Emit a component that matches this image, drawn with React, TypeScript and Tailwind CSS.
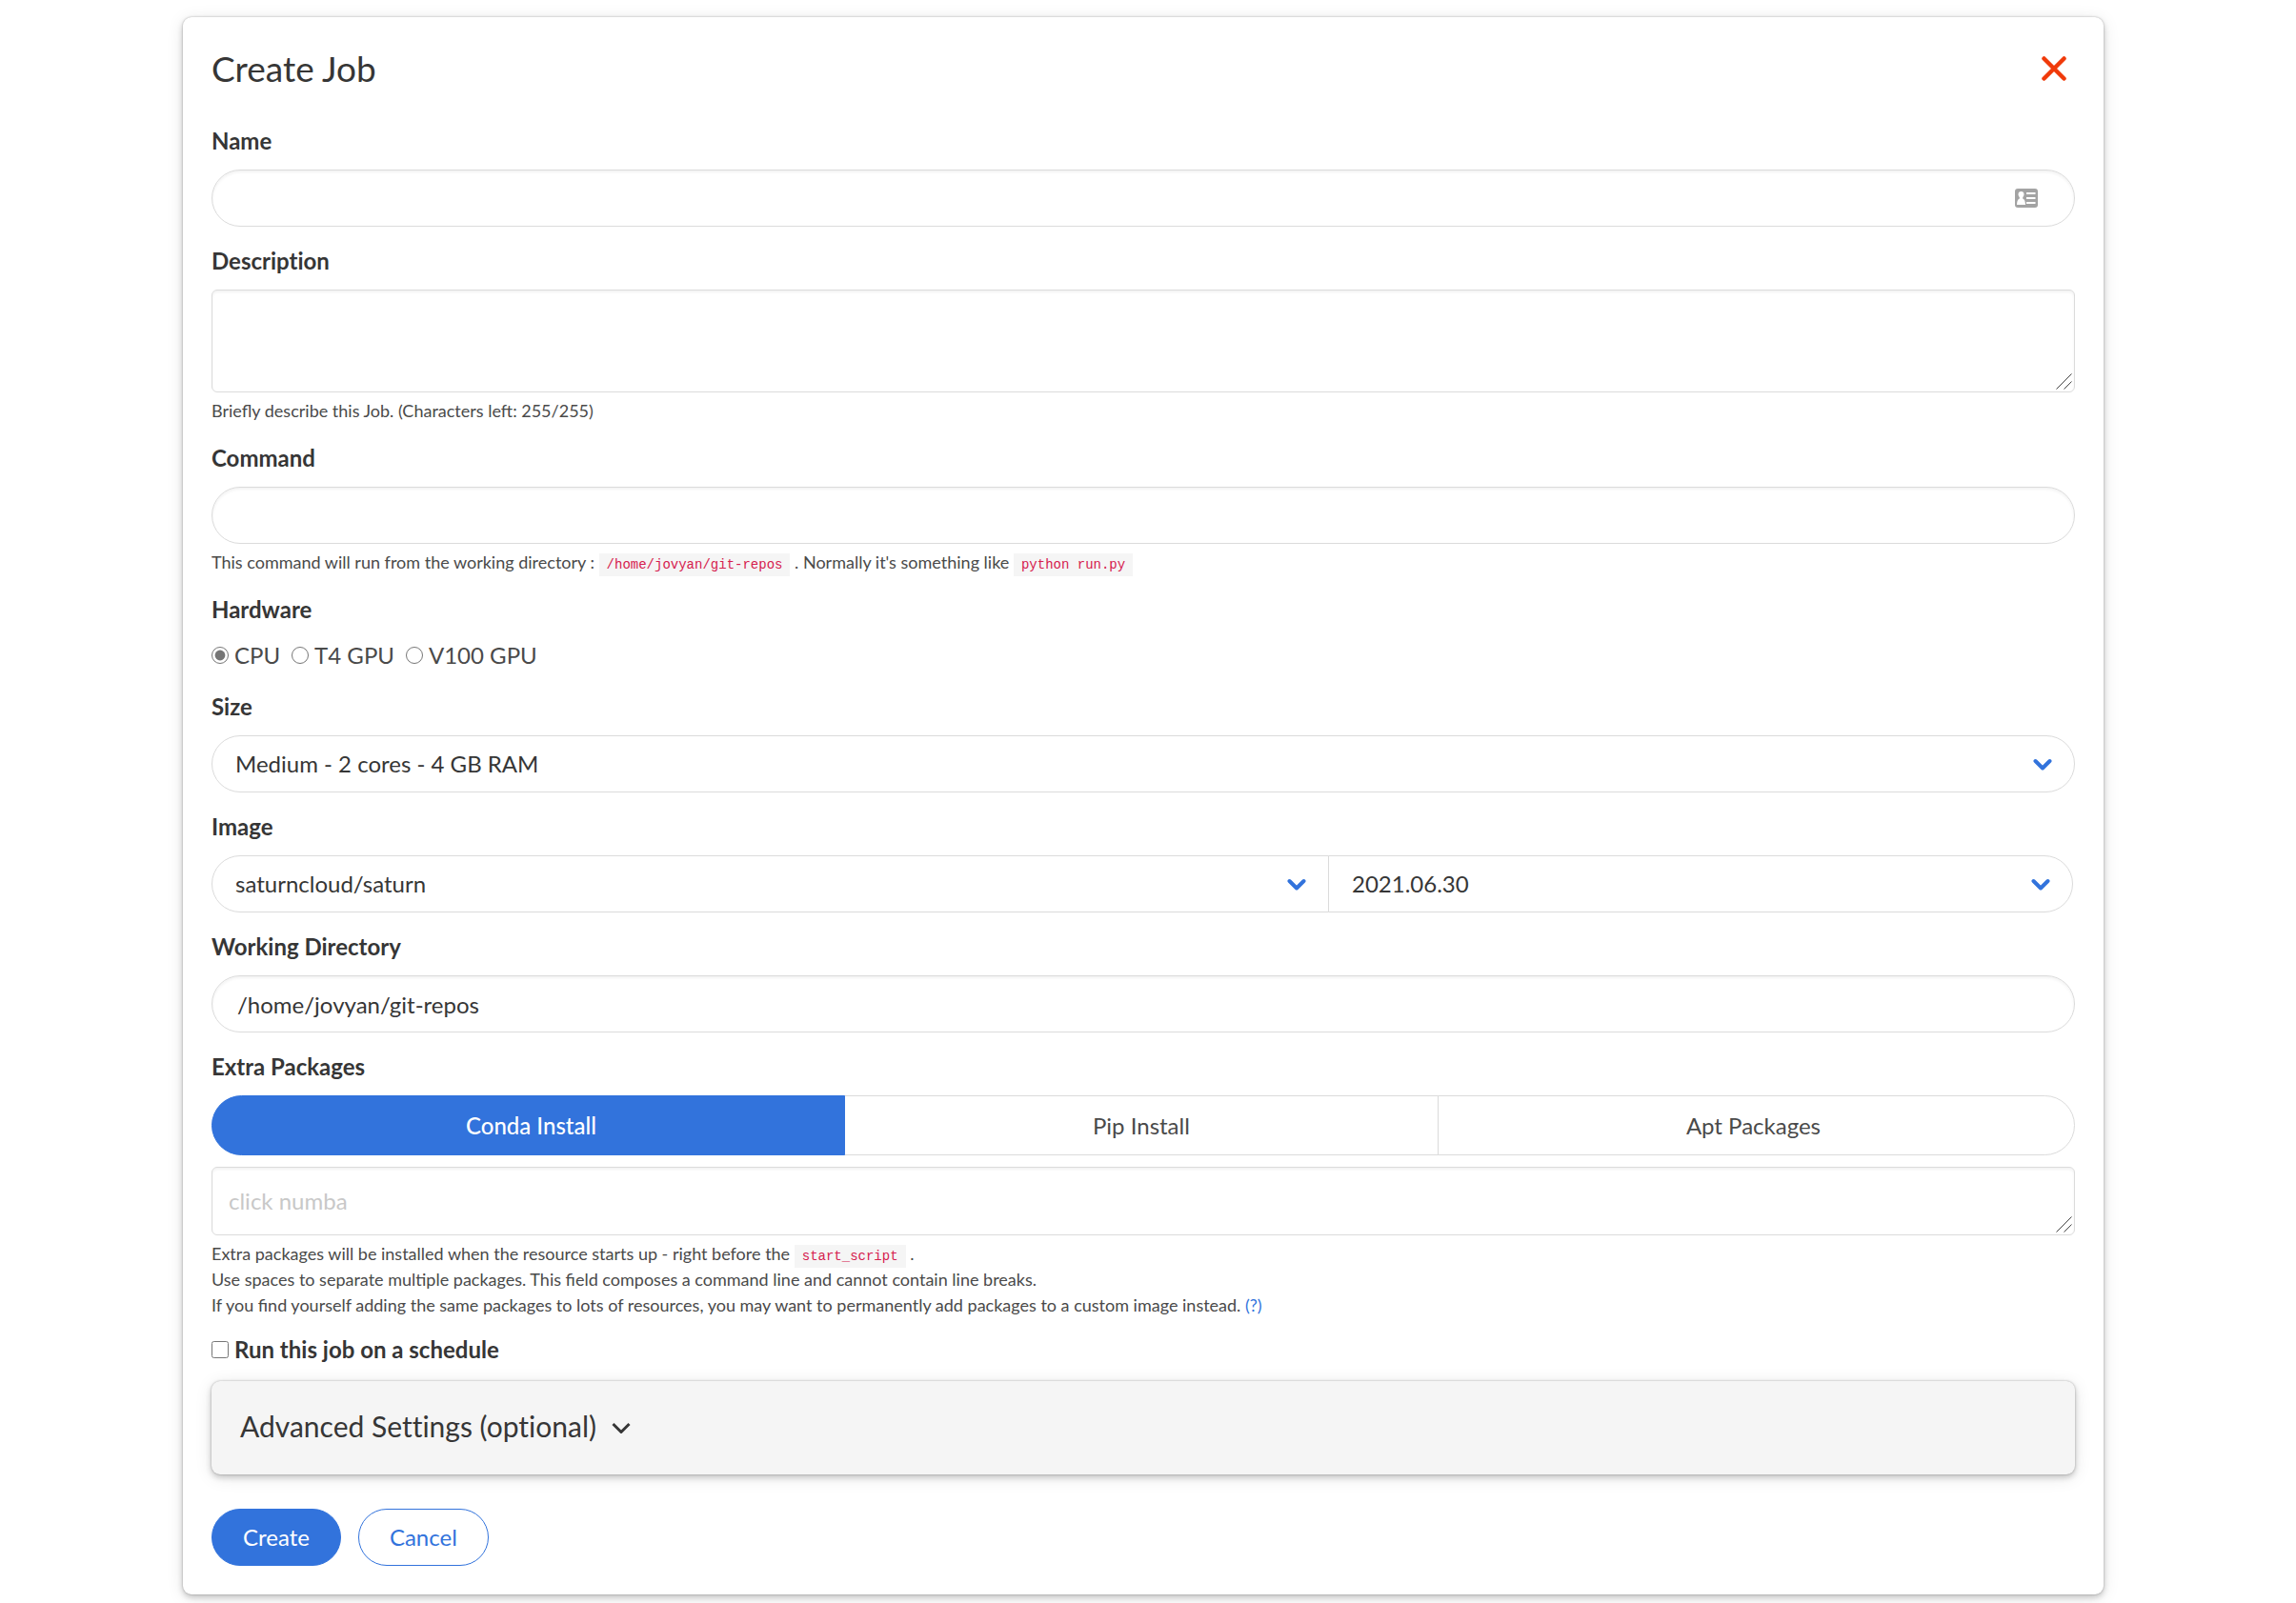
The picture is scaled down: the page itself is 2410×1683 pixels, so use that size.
import { useState } from "react";
import type { ReactNode } from "react";
import clsx from "clsx";

const packageTabs = ["Conda Install", "Pip Install", "Apt Packages"];
const hardwareOptions = ["CPU", "T4 GPU", "V100 GPU"];

const labelClass =
  "block text-2xl leading-9 font-bold text-[#363636] [font-variant-ligatures:no-common-ligatures]";
const controlClass =
  "block w-full h-[60px] rounded-full border border-[#dbdbdb] bg-white text-2xl text-[#363636] outline-none focus:border-[#3273dc]";
const inputClass = clsx(controlClass, "px-[26px] shadow-[inset_0_2px_3px_rgba(10,10,10,0.05)]");
const shadowClass =
  "shadow-[0_0_2px_rgba(10,10,10,0.3),0_3px_6px_rgba(10,10,10,0.2),0_3px_18px_rgba(10,10,10,0.1)]";

function Field({ label, htmlFor, children }: { label: string; htmlFor: string; children: ReactNode }) {
  return (
    <div className="mb-[18px]">
      <label htmlFor={htmlFor} className={clsx(labelClass, "mb-3")}>
        {label}
      </label>
      {children}
    </div>
  );
}

function Help({ children }: { children: ReactNode }) {
  return <p className="mt-[6px] text-lg leading-[27px] text-[#4a4a4a]">{children}</p>;
}

function Code({ children }: { children: ReactNode }) {
  return (
    <code className="px-2 py-1 bg-[#f5f5f5] font-['Liberation_Mono',monospace] text-sm text-[#d6204e]">
      {children}
    </code>
  );
}

function Select({ id, label, options, className }: { id: string; label?: string; options: string[]; className?: string }) {
  return (
    <div className="relative">
      <select id={id} aria-label={label} className={clsx(controlClass, "appearance-none px-6", className)}>
        {options.map((option) => (
          <option key={option}>{option}</option>
        ))}
      </select>
      <svg
        viewBox="0 0 20 13"
        className="absolute right-6 top-6 w-5 h-[13px] text-[#3273dc] pointer-events-none"
        fill="none"
        aria-hidden="true"
      >
        <path d="M2.500 3 10 10.500 17.500 3" stroke="currentColor" strokeWidth="4" strokeLinecap="round" strokeLinejoin="round" />
      </svg>
    </div>
  );
}

function TextArea({ id, className, placeholder }: { id: string; className: string; placeholder?: string }) {
  return (
    <div className="relative">
      <textarea
        id={id}
        placeholder={placeholder}
        className={clsx(
          "block w-full px-[17px] py-[17px] resize-none rounded-md border border-[#dbdbdb] shadow-[inset_0_2px_3px_rgba(10,10,10,0.05)]",
          "text-2xl leading-9 text-[#363636] placeholder:text-[#c8c8c8] outline-none focus:border-[#3273dc]",
          className
        )}
      />
      {/* Resize grip */}
      <svg viewBox="0 0 17 17" className="absolute right-[3px] bottom-[3px] w-[17px] h-[17px]" fill="none" stroke="#444" aria-hidden="true">
        <path d="M.5 16.500 16.500.5M8.500 16.500l8-8" />
      </svg>
    </div>
  );
}

export default function App() {
  const [hardware, setHardware] = useState("CPU");
  const [activeTab, setActiveTab] = useState("Conda Install");
  const [scheduled, setScheduled] = useState(false);

  return (
    <main className="pt-[18px] pb-[9px] pl-48 pr-[202px] bg-white font-['Lato',sans-serif] text-[#4a4a4a]">
      <form
        className={clsx("p-[30px] rounded-[9px] bg-white", shadowClass)}
        onSubmit={(e) => e.preventDefault()}
      >
        {/* Header */}
        <div className="flex items-center justify-between h-12 mb-[34px]">
          <h1 className="text-[37px] leading-12 text-[#363636]">Create Job</h1>
          <button type="button" aria-label="Close" className="mr-[9px]">
            <svg viewBox="0 0 26 26" className="w-[26px] h-[26px]" fill="none" aria-hidden="true">
              <path d="m2.500 2.500 21 21m0-21-21 21" stroke="#f03a0a" strokeWidth="4.500" strokeLinecap="round" />
            </svg>
          </button>
        </div>

        <Field label="Name" htmlFor="name">
          <div className="relative">
            <input id="name" type="text" className={inputClass} />
            <svg viewBox="0 0 24 20" className="absolute right-[39px] top-5 w-6 h-5" aria-hidden="true">
              <rect width="24" height="20" rx="3" fill="#a3a3a3" />
              <path
                d="M6.500 3c1.900 0 3 1.300 3 3.100 0 1.400-.6 2.300-1.300 2.900v1.600c1.800.9 2.600 2.400 2.800 6.400H2c.2-4 1-5.500 2.800-6.400V9c-.7-.6-1.300-1.500-1.300-2.900C3.500 4.300 4.600 3 6.500 3z"
                fill="#fff"
              />
              <path d="M12 5h9.500M12 10h9.500M12 15h9.500" stroke="#fff" strokeWidth="2" />
            </svg>
          </div>
        </Field>

        <Field label="Description" htmlFor="description">
          <TextArea id="description" className="h-[108px]" />
          <Help>Briefly describe this Job. (Characters left: 255/255)</Help>
        </Field>

        <Field label="Command" htmlFor="command">
          <input id="command" type="text" className={inputClass} />
          <Help>
            This command will run from the working directory : <Code>/home/jovyan/git-repos</Code> . Normally it's
            something like <Code>python run.py</Code>
          </Help>
        </Field>

        {/* Hardware */}
        <fieldset className="mb-[18px]">
          <legend className={clsx(labelClass, "mb-3")}>Hardware</legend>
          <div className="flex gap-3">
            {hardwareOptions.map((option) => (
              <label key={option} className="flex items-center gap-[6px] text-2xl leading-9">
                <input
                  type="radio"
                  name="hardware"
                  className="w-[18px] h-[18px] accent-[#757575]"
                  checked={hardware === option}
                  onChange={() => setHardware(option)}
                />
                {option}
              </label>
            ))}
          </div>
        </fieldset>

        <Field label="Size" htmlFor="size">
          <Select id="size" options={["Medium - 2 cores - 4 GB RAM"]} />
        </Field>

        <Field label="Image" htmlFor="image">
          <div className="flex pr-px">
            <div className="w-3/5">
              <Select id="image" options={["saturncloud/saturn"]} className="rounded-r-none" />
            </div>
            <div className="w-2/5 -ml-px">
              <Select id="image-version" label="Image version" options={["2021.06.30"]} className="rounded-l-none" />
            </div>
          </div>
        </Field>

        <Field label="Working Directory" htmlFor="working-directory">
          <input id="working-directory" type="text" defaultValue="/home/jovyan/git-repos" className={inputClass} />
        </Field>

        {/* Extra packages */}
        <Field label="Extra Packages" htmlFor="packages">
          <div className="flex mb-3">
            {packageTabs.map((tab) => (
              <button
                key={tab}
                type="button"
                onClick={() => setActiveTab(tab)}
                className={clsx(
                  "flex-auto h-[63px] px-[18px] border text-2xl -ml-px first:ml-0 first:pl-6 last:pr-6 first:rounded-l-full last:rounded-r-full",
                  activeTab === tab
                    ? "bg-[#3273dc] border-[#3273dc] text-white font-medium z-10"
                    : "bg-white border-[#dbdbdb] text-[#4a4a4a]"
                )}
              >
                {tab}
              </button>
            ))}
          </div>
          <TextArea id="packages" className="h-[72px]" placeholder="click numba" />
          <Help>
            Extra packages will be installed when the resource starts up - right before the <Code>start_script</Code> .
            <br />
            Use spaces to separate multiple packages. This field composes a command line and cannot contain line breaks.
            <br />
            If you find yourself adding the same packages to lots of resources, you may want to permanently add packages
            to a custom image instead.{" "}
            <a href="#" className="text-[#3273dc]">
              (?)
            </a>
          </Help>
        </Field>

        <div className="flex items-center gap-[6px] h-[30px] mb-[18px]">
          <input
            id="schedule"
            type="checkbox"
            className="w-[18px] h-[18px]"
            checked={scheduled}
            onChange={(e) => setScheduled(e.target.checked)}
          />
          <label htmlFor="schedule" className={labelClass}>
            Run this job on a schedule
          </label>
        </div>

        {/* Advanced settings */}
        <button
          type="button"
          className={clsx("flex items-center gap-4 w-full h-[98px] px-[30px] rounded-[9px] bg-[#f5f5f5] text-[#363636]", shadowClass)}
        >
          <span className="pb-1 text-3xl [font-variant-ligatures:no-common-ligatures]">
            Advanced Settings (optional)
          </span>
          <svg viewBox="0 0 20 13" className="w-5 h-[13px]" fill="none" aria-hidden="true">
            <path d="m1.500 2 8.500 8.500L18.500 2" stroke="currentColor" strokeWidth="3" strokeLinejoin="round" />
          </svg>
        </button>

        <div className="flex gap-[18px] mt-9">
          <button type="submit" className="h-[60px] px-8 rounded-full border border-[#3273dc] bg-[#3273dc] text-2xl text-white">
            Create
          </button>
          <button type="button" className="h-[60px] px-8 rounded-full border border-[#3273dc] bg-white text-2xl text-[#3273dc]">
            Cancel
          </button>
        </div>
      </form>
    </main>
  );
}
